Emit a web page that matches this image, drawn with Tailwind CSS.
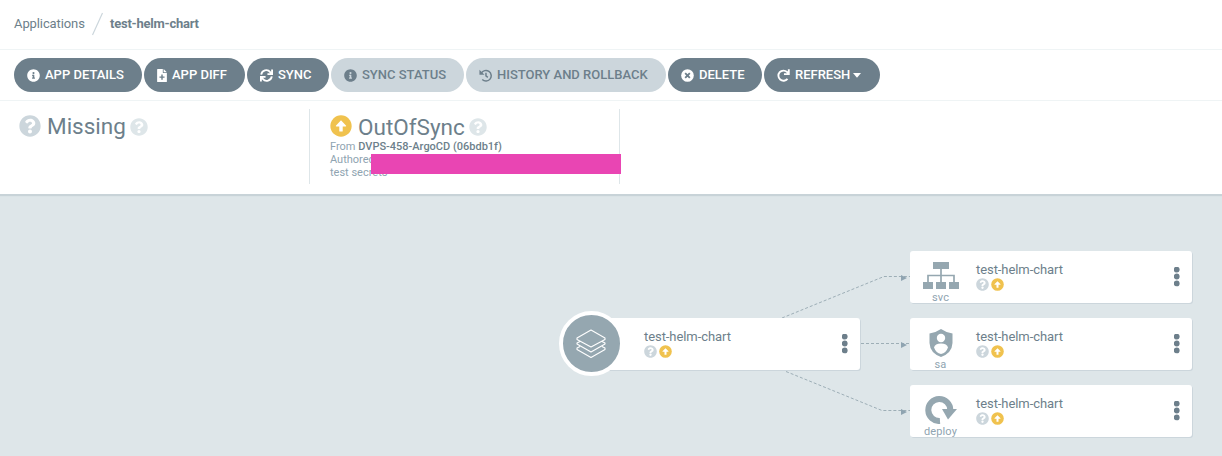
<!DOCTYPE html>
<html lang="en">
<head>
<meta charset="utf-8">
<title>test-helm-chart</title>
<script src="https://cdn.jsdelivr.net/npm/@tailwindcss/browser@4"></script>
</head>
<body class="w-[1222px] h-[456px] overflow-hidden bg-white font-['Roboto',sans-serif] text-[#6d7f8b]">
<svg class="hidden">
  <symbol id="info" viewBox="0 0 512 512"><path fill="currentColor" d="M256 8C119 8 8 119 8 256s111 248 248 248 248-111 248-248S393 8 256 8zm0 110a42 42 0 1 1 0 84 42 42 0 0 1 0-84zm56 254c0 7-5 12-12 12h-88c-7 0-12-5-12-12v-24c0-7 5-12 12-12h12v-64h-12c-7 0-12-5-12-12v-24c0-7 5-12 12-12h64c7 0 12 5 12 12v100h12c7 0 12 5 12 12v24z"/></symbol>
  <symbol id="question" viewBox="0 0 512 512"><path fill="currentColor" d="M504 256c0 137-111 248-248 248S8 393 8 256C8 119.100 119 8 256 8s248 111.100 248 248zM262.700 90c-54.500 0-89.300 23-116.500 63.800-3.500 5.300-2.400 12.400 2.700 16.300l34.700 26.300c5.200 3.900 12.600 3 16.700-2.100 17.900-22.700 30.100-35.800 57.300-35.800 20.400 0 45.700 13.100 45.700 33 0 15-12.400 22.700-32.500 34C247.100 238.500 216 254.900 216 296v4c0 6.600 5.400 12 12 12h56c6.600 0 12-5.400 12-12v-1.300c0-28.500 83.200-29.600 83.200-106.700 0-58-60.200-102-116.500-102zM256 338c-25.400 0-46 20.600-46 46s20.600 46 46 46 46-20.600 46-46-20.600-46-46-46z"/></symbol>
  <symbol id="up" viewBox="0 0 512 512"><circle cx="256" cy="256" r="248" fill="#f0c24e"/><path fill="#fff" d="M256 124 376 248q8 18-14 18h-66v104q0 14-14 14h-52q-14 0-14-14V266h-66q-22 0-14-18z"/></symbol>
  <symbol id="dots" viewBox="0 0 6 20"><g fill="#6d7f8b"><circle cx="2.700" cy="2.600" r="2.900"/><circle cx="2.700" cy="9.500" r="2.900"/><circle cx="2.700" cy="16.400" r="2.900"/></g></symbol>
</svg>

<header class="flex h-[50px] items-center border-b border-[#eff4f5] pl-[14px] pb-[2px] text-[13px]">
  <span class="w-[71px] whitespace-nowrap tracking-[-0.1px]">Applications</span>
  <svg class="ml-[6px] mr-[6px] h-[24px] w-[13px]" viewBox="0 0 13 24"><path d="M1.500 23 11.500 1" stroke="#ccd6dc" stroke-width="1.200"/></svg>
  <span class="font-bold tracking-[-0.23px]">test-helm-chart</span>
</header>

<nav class="flex h-[51px] items-center gap-[2px] border-b border-[#eff4f5] pl-[14px] text-[13px] font-medium text-white whitespace-nowrap">
  <div class="flex h-[34px] w-[128px] items-center rounded-full bg-[#6d7f8b] pl-[13px]"><svg class="mr-[5px] size-[13px]"><use href="#info"/></svg>APP DETAILS</div>
  <div class="flex h-[34px] w-[101px] items-center rounded-full bg-[#6d7f8b] pl-[13px]"><svg class="mr-[5px] h-[13px] w-[10px]" viewBox="0 0 384 512"><path fill="currentColor" fill-rule="evenodd" d="M24 0h200v136q0 24 24 24h136v328q0 24-24 24H24q-24 0-24-24V24Q0 0 24 0zM256 0l128 128H256zM164 220v72H92v56h72v72h56v-72h72v-56h-72v-72z"/></svg>APP DIFF</div>
  <div class="flex h-[34px] w-[82px] items-center rounded-full bg-[#6d7f8b] pl-[13px]"><svg class="mr-[5px] size-[13px]" viewBox="0 0 14 14" fill="none" stroke="currentColor" stroke-width="2"><path d="M1.300 6A5.500 5.500 0 0 1 11 3.300L12.500 5M13 .5v5H8M12.700 8A5.500 5.500 0 0 1 3 10.700L1.500 9M1 13.500v-5h5"/></svg>SYNC</div>
  <div class="flex h-[34px] w-[133px] items-center rounded-full bg-[#ccd6dc] pl-[13px] text-[#6d7f8b]"><svg class="mr-[5px] size-[13px]"><use href="#info"/></svg>SYNC STATUS</div>
  <div class="flex h-[34px] w-[200px] items-center rounded-full bg-[#ccd6dc] pl-[13px] text-[#6d7f8b]"><svg class="mr-[5px] size-[13px]" viewBox="0 0 14 14" fill="none" stroke="currentColor" stroke-width="1.600"><path d="M2.500 4.500A5.700 5.700 0 1 1 3.500 11.400M7.500 4v3.500l2 1.500"/><path fill="currentColor" stroke="none" d="M.5.800v5.400h5.400z"/></svg>HISTORY AND ROLLBACK</div>
  <div class="flex h-[34px] w-[94px] items-center rounded-full bg-[#6d7f8b] pl-[13px]"><svg class="mr-[5px] size-[13px]" viewBox="0 0 14 14"><circle cx="7" cy="7" r="6.800" fill="#fff"/><path d="m4.500 4.500 5 5m0-5-5 5" stroke="#6d7f8b" stroke-width="2"/></svg>DELETE</div>
  <div class="flex h-[34px] w-[116px] items-center rounded-full bg-[#6d7f8b] pl-[13px]"><svg class="mr-[5px] size-[13px]" viewBox="0 0 14 14" fill="none" stroke="currentColor" stroke-width="2"><path d="M11.300 10.600A5.500 5.500 0 1 1 10.800 3.200L12.500 5M12.700.3v5.200H7.500"/></svg>REFRESH<svg class="ml-[3px] h-[5px] w-[8px]" viewBox="0 0 8 5"><path d="M0 0h8L4 4.800z" fill="#fff"/></svg></div>
</nav>

<section class="relative z-10 flex h-[93px] bg-white pt-[8px] shadow-[0_2px_1px_#c8d3d8]">
  <div class="h-[75px] w-[310px] border-r border-[#dee6e9] pl-[19px]">
    <div class="flex h-[34px] items-center text-[22.5px]"><svg class="size-[22px] text-[#ccd6dc]"><use href="#question"/></svg><span class="ml-[6px] mt-[2px] w-[78px] whitespace-nowrap">Missing</span><svg class="ml-[5px] mt-[2px] size-[18px] text-[#dee6e9]"><use href="#question"/></svg></div>
  </div>
  <div class="relative h-[75px] w-[310px] border-r border-[#dee6e9] pl-[20px] text-[11px] leading-[13px] text-[#8fa4b1]">
    <div class="flex h-[31px] items-center pt-[3px] text-[22.5px] leading-[30px] text-[#6d7f8b]"><svg class="mt-[-1px] size-[22px]"><use href="#up"/></svg><span class="ml-[6px] mt-[2px] w-[106px] whitespace-nowrap">OutOfSync</span><svg class="ml-[5px] mt-[2px] size-[18px] text-[#dee6e9]"><use href="#question"/></svg></div>
    <p>From <span class="font-medium text-[#6d7f8b]">DVPS-458-ArgoCD (06bdb1f)</span></p>
    <p>Authored by</p>
    <p>test secrets</p>
    <div class="absolute left-[61px] top-[45px] h-[20px] w-[250px] bg-[#e945b3]"></div>
  </div>
</section>

<main class="relative h-[262px] bg-[#dee6e9] text-[13px] tracking-[-0.07px]">
  <svg class="absolute left-0 top-0 h-[262px] w-[1222px]" viewBox="0 194 1222 262">
    <g fill="none" stroke="#95a7b0" stroke-width="1" stroke-dasharray="3 2"><path stroke-width=".9" d="M782 318 884 276.500H910M861 343.500h49M786 371.500 882 410.500h28"/></g>
    <g fill="#8fa4b1"><path d="m901 275 6 3-6 3zM901 342l6 3-6 3zM901 409l6 3-6 3z"/></g>
  </svg>

  <div class="absolute left-[579px] top-[124px] flex h-[52px] w-[281px] rounded-[3px] bg-white pl-[65px] shadow-[1px_1px_0_#ccd6dc]">
    <div class="grow pt-[10px]"><div class="leading-[18px]">test-helm-chart</div><div class="mt-[-1px] flex gap-[2px]"><svg class="size-[13px] text-[#ccd6dc]"><use href="#question"/></svg><svg class="size-[13px]"><use href="#up"/></svg></div></div>
    <svg class="mr-[12px] mt-[16px] h-[20px] w-[6px] overflow-visible"><use href="#dots"/></svg>
  </div>
  <div class="absolute left-[559px] top-[117px] flex size-[65px] items-center justify-center rounded-full border-4 border-white bg-[#95a7b0]">
    <svg class="mr-[2px] h-[30px] w-[30px]" viewBox="0 0 30 30" fill="none" stroke="#fff" stroke-width="1.100" stroke-linejoin="round"><path d="m15 1 14 8v1.500l-14 7.500-14-7.500V9zM4 12.500l-3 1.500v1l14 8 14-8v-1l-3-1.500M4 17.500l-3 1.500v1.500l14 8 14-8V19l-3-1.500"/></svg>
  </div>

  <div class="absolute left-[910px] top-[57px] flex h-[52px] w-[282px] rounded-[3px] bg-white shadow-[1px_1px_0_#ccd6dc]">
    <div class="flex w-[66px] flex-col items-center pr-[5px] pt-[11px] text-[11px] leading-[13px] tracking-[0.1px] text-[#8fa4b1]">
      <svg class="h-[28px] w-[36px] shrink-0" viewBox="0 0 36 28" fill="#95a7b0"><path d="M10 0h16v7H10zM0 20h10v7H0zM13 20h10v7H13zM26 20h10v7H26z"/><path d="M18 7v13M5 20v-6.500h26V20" fill="none" stroke="#95a7b0" stroke-width="1.700"/></svg><span class="mt-[1px]">svc</span></div>
    <div class="grow pt-[10px]"><div class="leading-[18px]">test-helm-chart</div><div class="mt-[-1px] flex gap-[2px]"><svg class="size-[13px] text-[#ccd6dc]"><use href="#question"/></svg><svg class="size-[13px]"><use href="#up"/></svg></div></div>
    <svg class="mr-[12px] mt-[16px] h-[20px] w-[6px] overflow-visible"><use href="#dots"/></svg>
  </div>

  <div class="absolute left-[910px] top-[124px] flex h-[52px] w-[282px] rounded-[3px] bg-white shadow-[1px_1px_0_#ccd6dc]">
    <div class="flex w-[66px] flex-col items-center pr-[5px] pt-[11px] text-[11px] leading-[13px] tracking-[0.1px] text-[#8fa4b1]">
      <svg class="h-[28px] w-[24px] shrink-0" viewBox="0 0 24 28"><path d="M12 0Q17 3.500 23.500 4.500V14Q23 24 12 28 1 24 .5 14V4.500Q7 3.500 12 0z" fill="#95a7b0"/><circle cx="12" cy="9" r="4.200" fill="#fff"/><path d="M5 18.500q1-4 7-4t7 4q-2 5.500-7 6.500-5-1-7-6.500z" fill="#fff"/></svg><span class="mt-[1px]">sa</span></div>
    <div class="grow pt-[10px]"><div class="leading-[18px]">test-helm-chart</div><div class="mt-[-1px] flex gap-[2px]"><svg class="size-[13px] text-[#ccd6dc]"><use href="#question"/></svg><svg class="size-[13px]"><use href="#up"/></svg></div></div>
    <svg class="mr-[12px] mt-[16px] h-[20px] w-[6px] overflow-visible"><use href="#dots"/></svg>
  </div>

  <div class="absolute left-[910px] top-[191px] flex h-[52px] w-[282px] rounded-[3px] bg-white shadow-[1px_1px_0_#ccd6dc]">
    <div class="flex w-[66px] flex-col items-center pr-[5px] pt-[11px] text-[11px] leading-[13px] tracking-[0.1px] text-[#8fa4b1]">
      <svg class="h-[28px] w-[32px] shrink-0" viewBox="0 0 32 28"><path d="M15 25A11 11 0 1 1 25.300 14" fill="none" stroke="#95a7b0" stroke-width="6"/><path d="M17 13h15l-9 10.500z" fill="#95a7b0"/></svg><span class="mt-[1px]">deploy</span></div>
    <div class="grow pt-[10px]"><div class="leading-[18px]">test-helm-chart</div><div class="mt-[-1px] flex gap-[2px]"><svg class="size-[13px] text-[#ccd6dc]"><use href="#question"/></svg><svg class="size-[13px]"><use href="#up"/></svg></div></div>
    <svg class="mr-[12px] mt-[16px] h-[20px] w-[6px] overflow-visible"><use href="#dots"/></svg>
  </div>
</main>
</body>
</html>
